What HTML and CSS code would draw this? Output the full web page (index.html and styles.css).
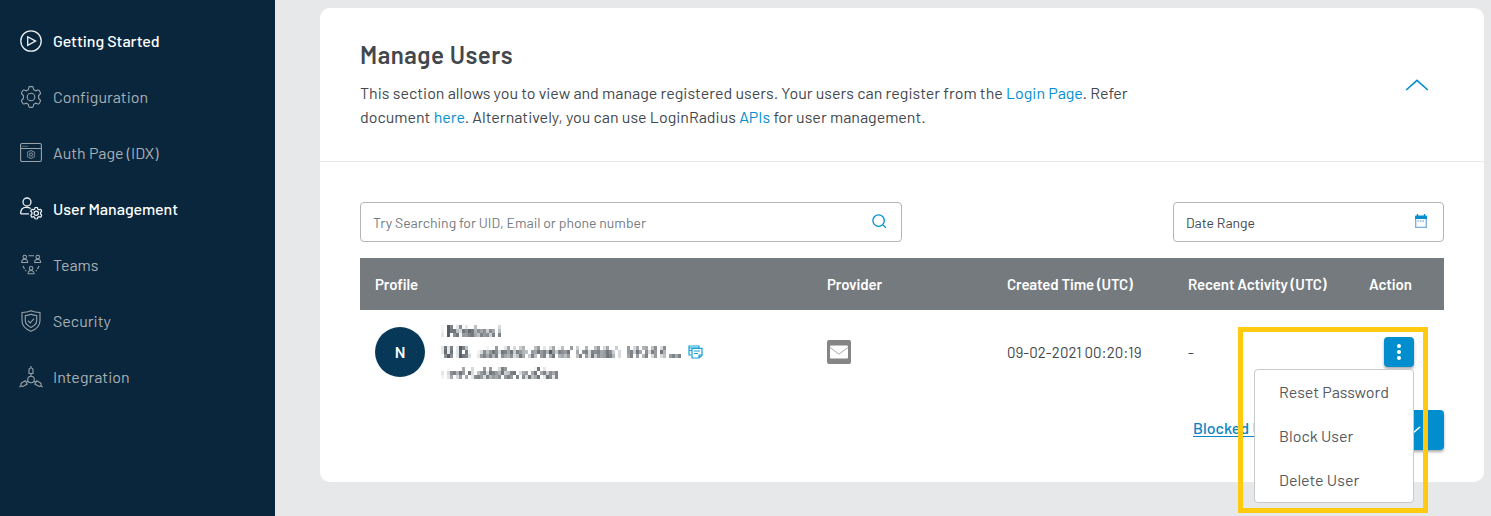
FILE: index.html
```html
<!DOCTYPE html>
<html lang="en">
<head>
<meta charset="utf-8">
<title>Manage Users</title>
<link rel="stylesheet" href="styles.css">
</head>
<body>
<svg width="0" height="0" class="defs">
  <symbol id="gear" viewBox="0 0 22 22"><path d="M8.800 1.500q.2-.9 1-.9h2.400q.8 0 1 .9l.5 2.200 2 1.100 2.200-.7q.9-.2 1.300.5l1.200 2.100q.4.700-.2 1.300l-1.600 1.600v2.800l1.600 1.600q.6.600.2 1.300l-1.200 2.100q-.4.700-1.300.5l-2.200-.7-2 1.100-.5 2.200q-.2.900-1 .9H9.800q-.8 0-1-.9l-.5-2.200-2-1.100-2.200.7q-.9.200-1.300-.5l-1.200-2.100q-.4-.700.2-1.300l1.600-1.600V9.600L1.800 8q-.6-.6-.2-1.300l1.200-2.100q.4-.7 1.300-.5l2.200.7 2-1.100z"/><circle cx="11" cy="11" r="3.800"/></symbol>
  <symbol id="person" viewBox="0 0 8 9"><circle cx="4" cy="2.600" r="1.900"/><path d="M.7 8.400c0-4.500 6.600-4.500 6.600 0z"/></symbol>
</svg>
<div class="app">
  <nav class="sidebar">
    <a class="nav-item active"><svg class="nav-icon" viewBox="0 0 22 22"><circle cx="11" cy="11" r="10.200"/><path d="M7.700 6.800v8.600l7.900-4.300z"/></svg><span>Getting Started</span></a>
    <a class="nav-item"><svg class="nav-icon"><use href="#gear"/></svg><span>Configuration</span></a>
    <a class="nav-item"><svg class="nav-icon" viewBox="0 0 22 22"><rect x=".6" y="1.500" width="20.800" height="18" rx="1.500"/><path d="M.6 6.500h20.800M2.500 4.200h1M4.500 4.200h1M6.500 4.200h1"/><use href="#gear" class="thick" x="6.500" y="8" width="9" height="9"/></svg><span>Auth Page (IDX)</span></a>
    <a class="nav-item active"><svg class="nav-icon" viewBox="0 0 22 22"><circle cx="7" cy="4" r="4"/><path d="M.6 15.800c0-4 2-6.500 5.400-6.500 2 0 3.400.2 4.700 1.200M.6 15.800h8.400"/><use href="#gear" class="thick" x="10" y="9" width="12.500" height="12.500"/></svg><span>User Management</span></a>
    <a class="nav-item"><svg class="nav-icon" viewBox="0 0 22 22"><use href="#person" x="1" y="0" width="7.500" height="9.500"/><use href="#person" x="14" y="0" width="7.500" height="9.500"/><use href="#person" x="7.300" y="11.200" width="7.500" height="9.800"/><path d="M8.500 1.800h5.500M3 12l1.500 3M5.200 16.200l1 1M19 12l-1.500 3M16.800 16.200l-1 1"/></svg><span>Teams</span></a>
    <a class="nav-item"><svg class="nav-icon" viewBox="0 0 22 22"><path d="M11 .7c2.600 1.200 5.700 1.700 9 1.800v8c0 5-4.200 8.900-9 10.800C6.200 19.400 2 15.500 2 10.500v-8C5.300 2.400 8.400 1.900 11 .7z"/><path d="M11 4.200c1.700.8 3.600 1.200 5.700 1.300v5c0 3-2.500 5.400-5.700 6.900-3.200-1.500-5.700-3.900-5.700-6.900v-5C7.400 5.400 9.300 5 11 4.200z"/><path d="M8 10.700l2.200 2.300L14 8.600"/></svg><span>Security</span></a>
    <a class="nav-item"><svg class="nav-icon wide" viewBox="0 0 24 22"><circle cx="12" cy="13.500" r="3.300"/><path d="M12 0v2M10 7.500V4c0-2.700 4-2.700 4 0v3.500zM12 7.500v2.700M9 15.200l-1.800 1.100M15 15.200l1.800 1.100M6.200 14.800l2 3.300-3.500 2c-2.400 1.100-4-1.800-1.900-3.300zM17.800 14.800l-2 3.300 3.500 2c2.400 1.100 4-1.800 1.900-3.300zM2.500 19.500L.4 21M21.500 19.500l2.100 1.500"/></svg><span>Integration</span></a>
  </nav>
  <main class="content">
    <section class="card">
      <header class="card-head">
        <div>
          <h1>Manage Users</h1>
          <p>This section allows you to view and manage registered users. Your users can register from the <a>Login Page</a>. Refer<br>document <a>here</a>. Alternatively, you can use LoginRadius <a>APIs</a> for user management.</p>
        </div>
        <svg class="collapse" viewBox="0 0 24 12"><path d="M1.200 11L12 1.300 22.800 11"/></svg>
      </header>
      <div class="card-body">
        <div class="filters">
          <div class="field search"><span>Try Searching for UID, Email or phone number</span><svg width="15" height="15" viewBox="0 0 15 15"><circle cx="6.600" cy="6.600" r="5.700"/><path d="M10.900 10.900l3 2.900"/></svg></div>
          <div class="field date"><span>Date Range</span><svg width="12" height="14" viewBox="0 0 12 14"><path class="solid" d="M1 1.500h10q1 0 1 1V5H0V2.500q0-1 1-1z"/><path d="M2.500 0v2M9.500 0v2"/><path class="pale" d="M.7 5v8.300h10.600V5"/><path class="dots" d="M2.500 7h7"/></svg></div>
        </div>
        <div class="row table-head"><span>Profile</span><span>Provider</span><span>Created Time (UTC)</span><span>Recent Activity (UTC)</span><span>Action</span></div>
        <div class="row table-row">
          <div class="profile"><span class="avatar">N</span>
            <div class="masked">
              <svg data-mask="name" width="64" height="12"></svg>
              <div class="uid"><svg data-mask="uid" width="242" height="12"></svg><svg class="copy" viewBox="0 0 15 14"><path d="M3.200 10H1V1h10v2M1 3h10M1 5.500h3"/><path d="M4 3.300h10v7.200l-3 2.500H4zM14 10h-3v3M6 6h6M6 8.500h4"/></svg></div>
              <svg data-mask="email" width="123" height="12"></svg>
            </div>
          </div>
          <span class="provider"><svg width="18" height="14" viewBox="0 0 18 14"><rect width="18" height="13" y=".5" rx=".8"/><path d="M0 2.500l9 6.700 9-6.700"/></svg></span>
          <span class="time">09-02-2021 00:20:19</span>
          <span>-</span>
          <div class="action">
            <button class="kebab"><i></i><i></i><i></i></button>
            <div class="highlight"></div>
            <ul class="menu"><li>Reset Password</li><li>Block User</li><li>Delete User</li></ul>
          </div>
        </div>
        <footer class="card-foot"><a>Blocked Users</a><button class="next"><svg width="14" height="10" viewBox="0 0 14 10"><path d="M1 2l5.500 5.500L13 2"/></svg></button></footer>
      </div>
    </section>
  </main>
</div>
<script src="mask.js"></script>
</body>
</html>
```
FILE: styles.css
```css
* { box-sizing: border-box; }
body { margin: 0; background: #e7e8ea; color: #42484e; font: 16px/24px Barlow, Roboto, sans-serif; overflow: hidden; }
.defs { position: absolute; }
svg { fill: none; flex: none; }
.app { display: flex; height: 516px; }
.sidebar { width: 275px; flex: none; background: #09263c; padding: 13px 0 0 20px; }
.nav-item { display: flex; align-items: center; gap: 11px; height: 56px; color: #a9b0b5; white-space: nowrap; }
.nav-item.active { color: #fff; font-weight: 500; letter-spacing: -.06px; }
.nav-icon { width: 22px; height: 22px; stroke: #98a3aa; stroke-width: 1.1; overflow: visible; }
.active .nav-icon { stroke: #edf0f2; stroke-width: 1.3; }
.nav-icon.wide { width: 24px; margin: 0 -1px; }
.nav-icon .thick { stroke-width: 2.200; }
.content { flex: 1; padding: 8px 7px 0 45px; }
.card { height: 474px; background: #fff; border-radius: 10px; }
.card-head { height: 154px; padding: 31px 55px 0 40px; border-bottom: 1px solid #e7e8ea; display: flex; justify-content: space-between; }
h1 { margin: 0 0 10px; font-size: 24px; line-height: 32px; font-weight: 600; letter-spacing: .5px; color: #42484e; }
p { margin: 0; white-space: nowrap; }
p a { color: #008ecf; }
.collapse { width: 24px; height: 12px; margin-top: 40px; stroke: #008ecf; stroke-width: 1.6; }
.card-body { padding: 40px 40px 0; }
.filters { display: flex; justify-content: space-between; margin-bottom: 16px; }
.field { height: 40px; border: 1px solid #b3b5b8; border-radius: 4px; display: flex; align-items: center; justify-content: space-between; font-size: 14px; padding: 0 16px 0 12px; }
.field span { padding-top: 2px; }
.field svg { stroke: #008ecf; stroke-width: 1.3; margin-bottom: 3px; }
.field .solid { fill: #008ecf; stroke: none; }
.field .pale { stroke: #79aee0; }
.field .dots { stroke: #8daedd; stroke-dasharray: 1.5 1; }
.search { width: 542px; padding-right: 14px; color: #747a7f; }
.search svg { margin-bottom: 2px; }
.date { width: 271px; }
.row { display: grid; grid-template-columns: 452px 180px 181px 181px 1fr; padding-left: 15px; align-items: center; white-space: nowrap; }
.table-head { height: 52px; background: #757a7e; color: #fff; font-size: 15px; font-weight: 600; letter-spacing: -.1px; }
.table-row { height: 84px; font-size: 15px; }
.profile { display: flex; gap: 16px; align-items: center; }
.avatar { width: 50px; height: 50px; border-radius: 50%; background: #073857; color: #fff; display: grid; place-items: center; font-weight: 600; font-size: 16px; }
.masked { display: flex; flex-direction: column; gap: 9px; }
.masked > svg { display: block; }
.uid { display: flex; gap: 5px; height: 12px; align-items: center; }
.copy { width: 15px; height: 14px; stroke: #16a0d8; stroke-width: 1.2; }
.provider { width: 24px; height: 24px; background: #858585; border-radius: 2px; display: grid; place-items: center; }
.provider rect { fill: #fff; }
.provider path { stroke: #aaa; }
.time { letter-spacing: .03px; }
.action { position: relative; align-self: stretch; padding: 27px 30px 0 0; display: flex; justify-content: flex-end; }
button { border: 0; background: #008ecf; border-radius: 4px; box-shadow: 0 2px 3px #0005; padding: 0; }
.kebab { width: 30px; height: 30px; display: flex; flex-direction: column; align-items: center; justify-content: center; gap: 2px; }
.kebab i { width: 4px; height: 4px; border-radius: 50%; background: #fff; }
.highlight { position: absolute; right: 16px; top: 17px; width: 190px; height: 186px; border: 5px solid #ffca0f; z-index: 2; }
.menu { position: absolute; right: 30px; top: 59px; z-index: 1; width: 160px; height: 134px; margin: 0; padding: 0 0 0 24px; list-style: none; background: #fff; border: 1px solid #c9cacb; border-radius: 4px; }
.menu li { height: 44px; line-height: 44px; font-size: 16px; color: #54595e; }
.card-foot { height: 72px; display: flex; justify-content: flex-end; padding-top: 16px; gap: 17px; font-size: 16px; }
.card-foot a { width: 115px; padding-top: 6px; white-space: nowrap; color: #0784c5; font-weight: 500; text-decoration: underline; text-underline-offset: 2px; }
.next { width: 119px; height: 40px; padding-left: 58px; }
.next svg { stroke: #fff; stroke-width: 1.6; }
```
FILE: mask.js
```js
// Each digit is the darkness of one cell in a redacted line of text.
const masks = {
  name: ["10da02902005000000030", "10dbb53b9cb6979497050", "20d09b188ab75a894a0a0"],
  uid: [
    "2b2a02da500000010080027030460005802037015008040060058037004000803706705903900000",
    "2c2b02c0b10013958b93ba7b4a865087b8a6d84a98b00709a3a9a78b9403008a4b7093a80b600000",
    "09d902dba30028a7a6a1976935b704a508a17b06758005a083b4978ba603007a0806a03803508a7a"
  ],
  email: ["00000007003000808003a80000000001b020000", "2039a6b80b3058a3ba86b45ab037807b07a497a", "102703807029a83a687908a80a093b57b02b92a"]
};
document.querySelectorAll("[data-mask]").forEach(svg => {
  masks[svg.dataset.mask].forEach((line, y) => [...line].forEach((digit, x) => {
    const level = parseInt(digit, 16);
    if (!level) return;
    const cell = document.createElementNS("http://www.w3.org/2000/svg", "rect");
    cell.setAttribute("x", x * 3);
    cell.setAttribute("y", y * 4);
    cell.setAttribute("width", 3);
    cell.setAttribute("height", 4);
    cell.setAttribute("fill", "#3d454d");
    cell.setAttribute("opacity", level / 15);
    svg.append(cell);
  }));
});
```
